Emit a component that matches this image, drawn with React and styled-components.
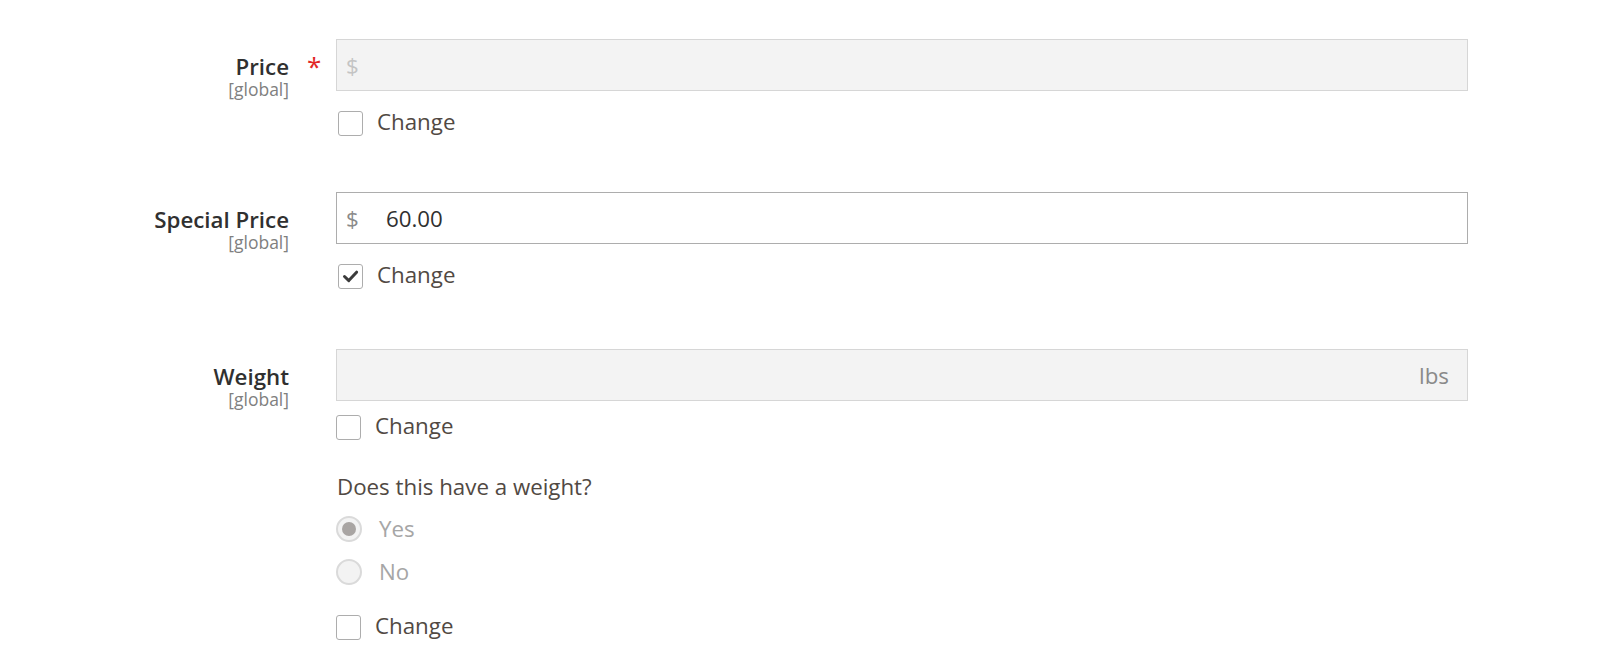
import React from "react";
import styled, { createGlobalStyle } from "styled-components";

const GlobalStyle = createGlobalStyle`
  html, body {
    margin: 0;
    padding: 0;
    background: #ffffff;
    font-family: "Open Sans", "Liberation Sans", sans-serif;
  }
`;

const Page = styled.div`
  width: 1610px;
  height: 670px;
  box-sizing: border-box;
  padding-top: 39px;
  overflow: hidden;
`;

const Field = styled.div`
  display: grid;
  grid-template-columns: 289px 47px 1132px;
  margin-bottom: ${p => p.gap || 0}px;
`;

const LabelCol = styled.div`
  display: flex;
  flex-direction: column;
  align-items: flex-end;
  padding-top: 15px;
`;

const LabelText = styled.span`
  font-size: 22.3px;
  line-height: 25px;
  font-weight: 600;
  color: #303030;
`;

const Scope = styled.span`
  font-size: 17.5px;
  line-height: 20px;
  color: #808080;
`;

const Required = styled.div`
  color: #e22626;
  font-size: 26px;
  line-height: 26px;
  padding-top: 14px;
  padding-left: 18px;
`;

const Control = styled.div`
  display: flex;
  flex-direction: column;
  align-items: flex-start;
`;

const InputBox = styled.div`
  width: 100%;
  height: 52px;
  box-sizing: border-box;
  display: flex;
  align-items: center;
  border: 1px solid ${p => (p.disabled ? "#d6d6d6" : "#adadad")};
  background: ${p => (p.disabled ? "#f3f3f3" : "#ffffff")};
  padding: 0 18px 0 9px;
  font-size: 22.3px;
`;

const Addon = styled.span`
  color: ${p => (p.disabled ? "#c4c4c4" : "#8a8a8a")};
  width: 40px;
`;

const Value = styled.span`
  color: #303030;
`;

const Suffix = styled.span`
  margin-left: auto;
  color: #8a8a8a;
`;

const CheckRow = styled.label`
  display: flex;
  align-items: center;
  gap: 14px;
  height: 25px;
  margin-top: ${p => p.top || 0}px;
  margin-left: ${p => p.indent || 0}px;
  font-size: 22.3px;
  color: #514943;
`;

const CheckText = styled.span`
  line-height: 21px;
  padding-bottom: 4px;
`;

const Box = styled.span`
  width: 25px;
  height: 25px;
  box-sizing: border-box;
  border: 1px solid #adadad;
  border-radius: 3px;
  background: #ffffff;
  display: flex;
  align-items: center;
  justify-content: center;
`;

const Question = styled.div`
  margin-top: 32px;
  margin-left: 1px;
  font-size: 22.3px;
  line-height: 30px;
  color: #514943;
`;

const RadioRow = styled.div`
  display: flex;
  align-items: center;
  gap: 17px;
  margin-top: ${p => p.top || 0}px;
  font-size: 22.3px;
  line-height: 26px;
  color: #a6a6a6;
`;

const RadioDot = styled.span`
  width: 26px;
  height: 26px;
  box-sizing: border-box;
  border-radius: 50%;
  border: 2px solid #dadada;
  background: #f3f3f3;
  display: flex;
  align-items: center;
  justify-content: center;
  &::after {
    content: "";
    width: 14px;
    height: 14px;
    border-radius: 50%;
    background: ${p => (p.checked ? "#a9a5a3" : "transparent")};
  }
`;

const Check = ({ checked, top, indent }) => (
  <CheckRow top={top} indent={indent}>
    <Box>
      {checked && (
        <svg width="17" height="17" viewBox="0 0 17 17">
          <path
            d="M2.5 8.5 L6.8 12.6 L14.6 4.2"
            fill="none"
            stroke="#3b3b3b"
            strokeWidth="3"
            strokeLinecap="round"
            strokeLinejoin="round"
          />
        </svg>
      )}
    </Box>
    <CheckText>Change</CheckText>
  </CheckRow>
);

const Label = ({ text }) => (
  <LabelCol>
    <LabelText>{text}</LabelText>
    <Scope>[global]</Scope>
  </LabelCol>
);

export default function App() {
  return (
    <Page>
      <GlobalStyle />
      <Field gap={56}>
        <Label text="Price" />
        <Required>*</Required>
        <Control>
          <InputBox disabled>
            <Addon disabled>$</Addon>
          </InputBox>
          <Check top={20} indent={2} />
        </Control>
      </Field>

      <Field gap={60}>
        <Label text="Special Price" />
        <div />
        <Control>
          <InputBox>
            <Addon>$</Addon>
            <Value>60.00</Value>
          </InputBox>
          <Check checked top={20} indent={2} />
        </Control>
      </Field>

      <Field>
        <Label text="Weight" />
        <div />
        <Control>
          <InputBox disabled>
            <Suffix>lbs</Suffix>
          </InputBox>
          <Check top={14} />
          <Question>Does this have a weight?</Question>
          <RadioRow top={14}>
            <RadioDot checked />
            Yes
          </RadioRow>
          <RadioRow top={17}>
            <RadioDot />
            No
          </RadioRow>
          <Check top={30} />
        </Control>
      </Field>
    </Page>
  );
}
